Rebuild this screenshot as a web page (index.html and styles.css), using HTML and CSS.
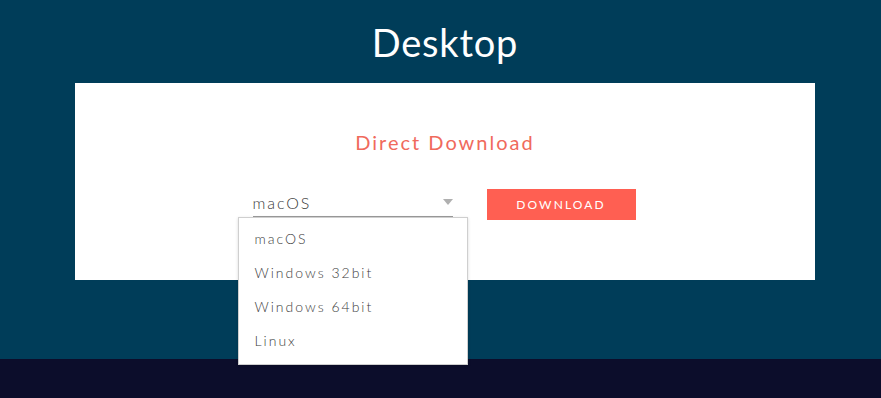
FILE: index.html
```html
<!DOCTYPE html>
<html>
<head>
<meta charset="utf-8">
<link rel="stylesheet" href="styles.css">
</head>
<body>
<main class="hero">
  <h1 class="title">Desktop</h1>
  <section class="card">
    <h2 class="subtitle">Direct Download</h2>
    <div class="controls">
      <div class="select">
        <span class="select-value">macOS</span>
        <span class="caret"></span>
        <ul class="menu">
          <li>macOS</li>
          <li>Windows 32bit</li>
          <li>Windows 64bit</li>
          <li>Linux</li>
        </ul>
      </div>
      <button class="btn">DOWNLOAD</button>
    </div>
  </section>
</main>
<footer class="footer"></footer>
</body>
</html>
```
FILE: styles.css
```css
html, body { margin: 0; padding: 0; }
body {
  font-family: Lato, "Open Sans", sans-serif;
  background: #0c0d2b;
  width: 881px;
  height: 398px;
  overflow: hidden;
}
.hero {
  background: #003d59;
  height: 359px;
  padding-top: 1px;
  box-sizing: border-box;
}
.title {
  margin: 19px 0 0;
  padding-left: 9px;
  height: 63px;
  text-align: center;
  color: #ffffff;
  font-weight: 400;
  font-size: 38px;
  line-height: 44px;
  letter-spacing: 0.8px;
}
.card {
  margin: 0 66px 0 75px;
  background: #ffffff;
  height: 197px;
  padding-top: 47px;
  box-sizing: border-box;
}
.subtitle {
  margin: 0;
  text-align: center;
  color: #f06a5c;
  font-weight: 400;
  font-size: 20px;
  line-height: 24px;
  letter-spacing: 2px;
}
.controls {
  display: flex;
  justify-content: center;
  align-items: flex-start;
  gap: 34px;
  margin-top: 35px;
  margin-left: -2px;
}
.select {
  position: relative;
  width: 200px;
  height: 26px;
  border-bottom: 1px solid #9b9b9b;
  margin-top: 1px;
}
.select-value {
  display: block;
  font-size: 16px;
  line-height: 26px;
  color: #3a3a3a;
  letter-spacing: 1.9px;
  font-weight: 300;
}
.caret {
  position: absolute;
  right: 0;
  top: 9px;
  width: 0;
  height: 0;
  border-left: 5px solid transparent;
  border-right: 5px solid transparent;
  border-top: 6px solid #b0b0b0;
}
.menu {
  position: absolute;
  left: -15px;
  top: 27px;
  width: 228px;
  margin: 0;
  padding: 4px 0 6px;
  list-style: none;
  background: #ffffff;
  border: 1px solid #cfcfcf;
  box-shadow: 0 1px 3px rgba(0,0,0,0.15);
}
.menu li {
  height: 34px;
  line-height: 34px;
  padding-left: 16px;
  font-size: 14px;
  color: #3d3d3d;
  letter-spacing: 2px;
  font-weight: 300;
}
.btn {
  width: 149px;
  height: 31px;
  background: #ff5f52;
  border: 0;
  color: #ffffff;
  font-family: Lato, "Open Sans", sans-serif;
  font-size: 12px;
  letter-spacing: 2.1px;
  padding: 0;
  margin-top: 0;
}
.footer { height: 39px; background: #0c0d2b; }
```
